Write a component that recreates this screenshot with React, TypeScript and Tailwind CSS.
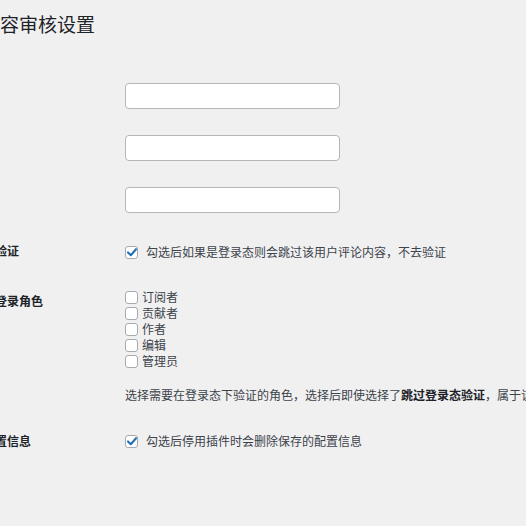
import React from "react";

const ROLES = ["订阅者", "贡献者", "作者", "编辑", "管理员"];

function Check({ checked }: { checked?: boolean }) {
  return (
    <span className="relative inline-flex h-[13px] w-[13px] shrink-0 items-center justify-center rounded-[3px] border border-[#a7aaad] bg-white">
      {checked && (
        <svg viewBox="0 0 20 20" className="absolute h-[16px] w-[16px]">
          <path d="M5 10.5 L8.5 14 L15 6.5" fill="none" stroke="#2271b1" strokeWidth="2.6" strokeLinecap="round" strokeLinejoin="round" />
        </svg>
      )}
    </span>
  );
}

function TextInput() {
  return <div className="h-[26px] w-[215px] rounded-[4px] border border-[#b4b6b9] bg-white" />;
}

export default function App() {
  return (
    <div
      className="h-[526px] w-[526px] overflow-hidden bg-[#f0f0f1] text-[12px] text-[#3c434a]"
      style={{ fontFamily: '"Noto Sans CJK SC", "Noto Sans", sans-serif' }}
    >
      <div className="ml-[-65px] w-[800px]">
        {/* Title */}
        <h1 className="ml-[46px] pt-[10px] text-[19px] leading-[28px] text-[#1d2327]">内容审核设置</h1>

        {/* Inputs */}
        <div className="mt-[32px]">
          {[0, 1, 2].map((i) => (
            <div key={i} className="flex py-[13px]">
              <div className="w-[190px]" />
              <TextInput />
            </div>
          ))}
        </div>

        {/* Skip verification */}
        <div className="flex pt-[16px]">
          <div className="w-[190px] pt-[-2px] font-bold leading-[18px] text-[#1d2327]">跳过登录态验证</div>
          <label className="flex items-center gap-[8px] leading-[20px]">
            <Check checked />
            <span>勾选后如果是登录态则会跳过该用户评论内容，不去验证</span>
          </label>
        </div>

        {/* Roles */}
        <div className="flex pt-[27px]">
          <div className="w-[190px] pt-[3px] font-bold leading-[18px] text-[#1d2327]">需要验证的登录角色</div>
          <div>
            <div className="flex flex-col">
              {ROLES.map((r) => (
                <label key={r} className="flex items-center gap-[4px] leading-[16px]">
                  <Check />
                  <span>{r}</span>
                </label>
              ))}
            </div>
            <p className="mt-[16px] whitespace-nowrap leading-[20px]">
              选择需要在登录态下验证的角色，选择后即使选择了
              <b className="font-bold text-[#1d2327]">跳过登录态验证</b>
              ，属于该角色的用户仍需验证
            </p>
          </div>
        </div>

        {/* Delete config */}
        <div className="flex pt-[26px]">
          <div className="w-[190px] font-bold leading-[20px] text-[#1d2327]">停用删除配置信息</div>
          <label className="flex items-center gap-[8px] leading-[20px]">
            <Check checked />
            <span>勾选后停用插件时会删除保存的配置信息</span>
          </label>
        </div>
      </div>
    </div>
  );
}
